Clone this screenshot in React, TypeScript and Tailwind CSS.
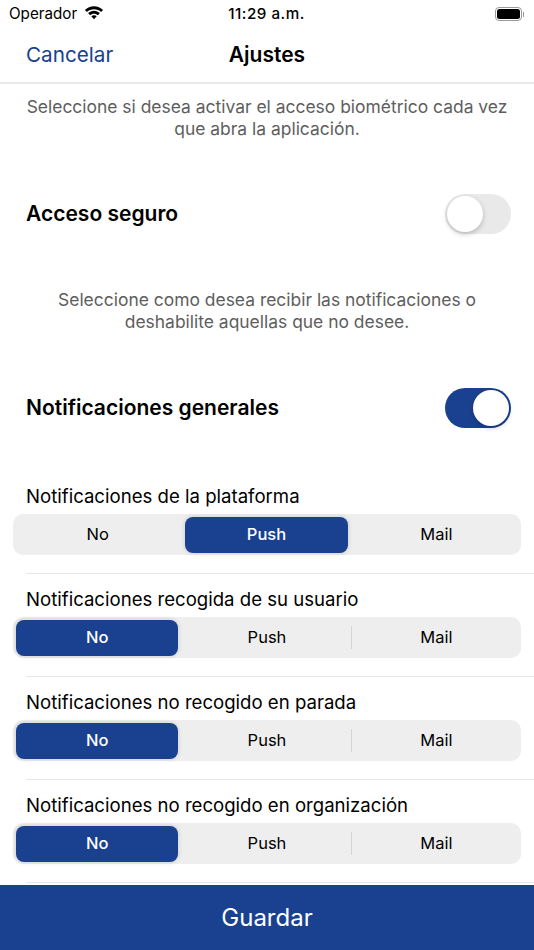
// Ajustes - notification and access settings screen

import { memo } from 'react'

const font = 'font-["Inter","Liberation_Sans",sans-serif]'

function WifiIcon() {
  return (
    <svg width="20" height="15" viewBox="0 0 20 15" fill="#000" className="-mt-[1px]">
      <path d="M10 3.200c2.700 0 5.200 1 7.100 2.800l2-2.100C16.700 1.600 13.500.2 10 .2S3.300 1.600.900 3.900l2 2.100C4.800 4.200 7.300 3.200 10 3.200z" />
      <path d="M10 7.700c1.500 0 2.900.6 3.900 1.500l2-2.100C14.300 5.600 12.300 4.700 10 4.700S5.700 5.600 4.100 7.100l2 2.100c1-.9 2.400-1.500 3.900-1.500z" />
      <path d="M10 9.200c-1.100 0-2 .4-2.700 1.100L10 13.200l2.700-2.900c-.7-.7-1.600-1.100-2.700-1.100z" />
    </svg>
  )
}

function BatteryIcon() {
  return (
    <div className="flex items-center">
      <div className="flex h-[14px] w-[27px] items-center justify-center rounded-[4px] border border-[#9a9a9a] p-[1px]">
        <div className="h-full w-full rounded-[2.5px] bg-black" />
      </div>
      <div className="ml-[1px] h-[5px] w-[1px] bg-[#9a9a9a]" />
    </div>
  )
}

const Toggle = memo(function Toggle({ on }: { on: boolean }) {
  return (
    <div
      className={
        on
          ? 'flex h-[40px] w-[66px] items-center justify-end rounded-full bg-[#1a4190] p-[2px]'
          : 'flex h-[40px] w-[66px] items-center justify-start rounded-full bg-[#e9e9ea] p-[2px]'
      }
    >
      <div className="h-[36px] w-[36px] rounded-full bg-white shadow-[0_2px_5px_rgba(0,0,0,0.22)]" />
    </div>
  )
})

const options = ['No', 'Push', 'Mail']

function Segmented({ selected }: { selected: number }) {
  return (
    <div className="mx-[13px] flex h-[41px] w-[508px] items-stretch rounded-[10px] bg-[#eeeeef]">
      {options.map((opt, i) => (
        <div key={opt} className="relative flex flex-1 items-center justify-center py-[2.5px]">
          {i === selected ? (
            <div className="ml-[3px] mr-[4px] flex h-full flex-1 items-center justify-center rounded-[8px] bg-[#1a4190] text-[16.5px] font-medium text-white shadow-[0_0_5px_rgba(0,0,0,0.16)]">
              {opt}
            </div>
          ) : (
            <span className="text-[16.5px] font-normal text-black">{opt}</span>
          )}
          {i === 2 && selected === 0 && (
            <div className="absolute -left-[1px] top-[9px] h-[23px] w-px bg-[#d4d4d6]" />
          )}
        </div>
      ))}
    </div>
  )
}

const rows = [
  { label: 'Notificaciones de la plataforma', selected: 1 },
  { label: 'Notificaciones recogida de su usuario', selected: 0 },
  { label: 'Notificaciones no recogido en parada', selected: 0 },
  { label: 'Notificaciones no recogido en organización', selected: 0 },
]

export default function App() {
  return (
    <div className={`${font} flex h-[950px] w-[534px] flex-col overflow-hidden bg-white text-black`}>
      {/* Status bar */}
      <div className="flex h-[28px] shrink-0 items-center justify-between pl-[9px] pr-[10px]">
        <div className="flex w-[180px] items-center gap-[7px] text-[15.2px]">
          Operador
          <WifiIcon />
        </div>
        <span className="text-[15.2px] font-medium tracking-[0.5px]">11:29 a.m.</span>
        <div className="flex w-[180px] justify-end">
          <BatteryIcon />
        </div>
      </div>

      {/* Nav bar */}
      <div className="relative flex h-[56px] shrink-0 items-center justify-center border-b-2 border-[#e8e8e8]">
        <span className="absolute left-[26px] text-[20.7px] text-[#1a4190]">Cancelar</span>
        <span className="text-[21px] font-semibold">Ajustes</span>
      </div>

      {/* Content */}
      <div className="flex-1 overflow-hidden">
        <p className="mt-[12px] px-[20px] text-center text-[17.45px] leading-[22px] text-[#5e5e5e]">
          Seleccione si desea activar el acceso biométrico cada vez que abra la aplicación.
        </p>

        <div className="mt-[54px] flex items-center justify-between pl-[26px] pr-[23px]">
          <span className="text-[21px] font-semibold">Acceso seguro</span>
          <Toggle on={false} />
        </div>

        <p className="mt-[55px] px-[50px] text-center text-[17.45px] leading-[22px] text-[#5e5e5e]">
          Seleccione como desea recibir las notificaciones o deshabilite aquellas que no desee.
        </p>

        <div className="mt-[55px] flex items-center justify-between pl-[26px] pr-[23px]">
          <span className="text-[21px] font-semibold">Notificaciones generales</span>
          <Toggle on />
        </div>

        <div className="mt-[56px] flex flex-col">
          {rows.map((row) => (
            <div key={row.label} className="flex h-[103px] flex-col">
              <div className="flex h-[30px] shrink-0 items-start pl-[26px] text-[18.6px] leading-[24px]">
                {row.label}
              </div>
              <Segmented selected={row.selected} />
              <div className="ml-[26px] mt-[18px] h-px bg-[#e6e6e6]" />
            </div>
          ))}
        </div>
      </div>

      {/* Save button */}
      <div className="flex h-[65px] shrink-0 items-center justify-center bg-[#1a4190] text-[24px] text-white">
        Guardar
      </div>
    </div>
  )
}
